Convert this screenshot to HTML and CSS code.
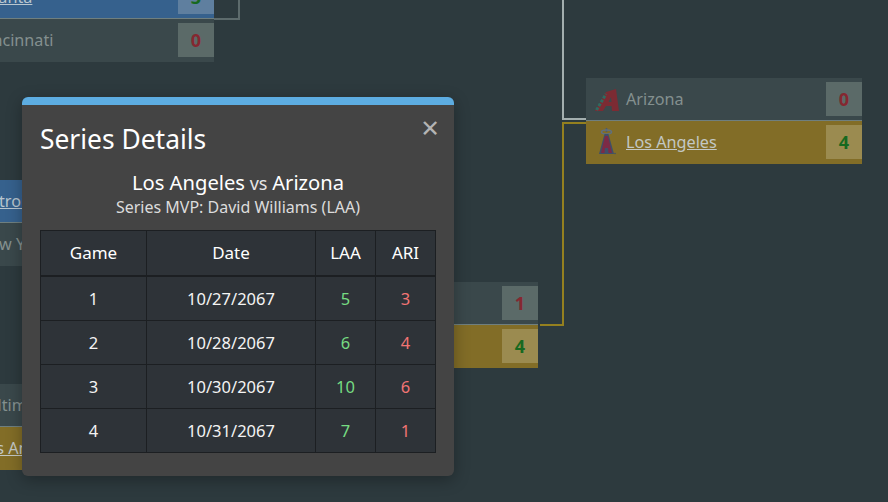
FILE: index.html
```html
<!DOCTYPE html>
<html lang="en">
<head>
    <meta charset="UTF-8">
    <meta name="viewport" content="width=device-width, initial-scale=1.0">
    <title>Playoff Bracket</title>
    <link rel="stylesheet" href="styles.css">
</head>
<body>
    <div class="bracket">
        <!-- connectors -->
        <div class="line line-top-left"></div>
        <div class="line line-final-win"></div>
        <div class="line line-final-lose"></div>
        <div class="line line-mid-win"></div>

        <div class="matchup matchup-atl">
            <div class="team team-blue"><span class="team-name"><a href="#">Atlanta</a></span><span class="score win">3</span></div>
            <div class="team"><span class="team-name">Cincinnati</span><span class="score lose">0</span></div>
        </div>

        <div class="matchup matchup-det">
            <div class="team team-blue"><span class="team-name"><a href="#">Detroit</a></span><span class="score win">4</span></div>
            <div class="team"><span class="team-name">New York</span><span class="score lose">2</span></div>
        </div>

        <div class="matchup matchup-bal">
            <div class="team"><span class="team-name">Baltimore</span><span class="score lose">1</span></div>
            <div class="team team-gold"><span class="team-name"><a href="#">Los Angeles</a></span><span class="score win">4</span></div>
        </div>

        <div class="matchup matchup-mid">
            <div class="team"><span class="team-name">Detroit</span><span class="score lose">1</span></div>
            <div class="team team-gold"><span class="team-name"><a href="#">Los Angeles</a></span><span class="score win">4</span></div>
        </div>

        <div class="matchup matchup-final">
            <div class="team">
                <svg class="logo" viewBox="0 0 26 30">
                    <path d="M1 27 L12 8 L22 5 L25 27 H18 L17.5 22 H12 L9 27 Z" fill="#7c2b33"/>
                    <path d="M2.5 26 L12 10" stroke="#2f6b60" stroke-width="3" stroke-dasharray="3 1.5"/>
                    <path d="M14.5 18 L17 13 L17.5 18 Z" fill="#3d474b"/>
                </svg>
                <span class="team-name">Arizona</span><span class="score lose">0</span>
            </div>
            <div class="team team-gold">
                <svg class="logo" viewBox="0 0 26 30">
                    <path d="M12.5 1 V5" stroke="#4a5a70" stroke-width="1.5"/>
                    <ellipse cx="12.5" cy="5" rx="5" ry="2" fill="none" stroke="#5f7080" stroke-width="1.5"/>
                    <path d="M10.5 7 H14.5 L20 27 H5 Z" fill="#3f4f68"/>
                    <path d="M11 9 H14 L18 26 H14.5 L14 21 H11 L10.5 26 H7 Z" fill="#7c2b46"/>
                    <circle cx="21" cy="26.5" r="0.8" fill="#3f4f68"/>
                </svg>
                <span class="team-name"><a href="#">Los Angeles</a></span><span class="score win">4</span>
            </div>
        </div>
    </div>

    <div class="modal">
        <button class="modal-close">&times;</button>
        <h2 class="modal-title">Series Details</h2>
        <div class="series-teams"><b>Los Angeles</b> vs <b>Arizona</b></div>
        <div class="series-mvp">Series MVP: David Williams (LAA)</div>
        <table class="games">
            <thead>
                <tr><th class="col-game">Game</th><th class="col-date">Date</th><th class="col-team">LAA</th><th class="col-team">ARI</th></tr>
            </thead>
            <tbody>
                <tr><td>1</td><td>10/27/2067</td><td class="won">5</td><td class="lost">3</td></tr>
                <tr><td>2</td><td>10/28/2067</td><td class="won">6</td><td class="lost">4</td></tr>
                <tr><td>3</td><td>10/30/2067</td><td class="won">10</td><td class="lost">6</td></tr>
                <tr><td>4</td><td>10/31/2067</td><td class="won">7</td><td class="lost">1</td></tr>
            </tbody>
        </table>
    </div>
</body>
</html>
```

FILE: styles.css
```css
* {
    box-sizing: border-box;
}
html, body {
    height: 100%;
}
body {
    margin: 0;
    overflow: hidden;
    background-color: #2d3a3e;
    font-family: "Noto Sans", sans-serif;
    color: #fff;
}
.bracket {
    position: relative;
    width: 888px;
    height: 502px;
}

/* bracket is a free canvas, matchups sit at their slots */
.matchup {
    position: absolute;
    width: 276px;
    height: 86px;
}
.matchup-atl { left: -62px; top: -24px; }
.matchup-det { left: -62px; top: 180px; }
.matchup-bal { left: -62px; top: 384px; }
.matchup-mid { left: 262px; top: 282px; }
.matchup-final { left: 586px; top: 78px; }

.team {
    display: flex;
    align-items: center;
    height: 43px;
    padding-left: 8px;
    padding-bottom: 1px;
    background-color: #3a484b;
    color: #84908f;
    font-size: 16.2px;
}
.team:first-child {
    padding-bottom: 0;
    border-bottom: 1px solid #6f7f7f;
}
.team-blue {
    background-color: #36618d;
    color: #b9c6cf;
}
.team-gold {
    background-color: #826d27;
    color: #c3c8c4;
}
.team-name {
    flex: 1;
    padding-left: 32px;
}
.logo + .team-name {
    padding-left: 6px;
}
.team-name a {
    color: inherit;
}
.logo {
    width: 26px;
    height: 30px;
    flex-shrink: 0;
}
.score {
    width: 36px;
    height: 34px;
    line-height: 34px;
    text-align: center;
    font-size: 18px;
    font-weight: bold;
    background-color: #5b6a68;
}
.team-gold .score {
    background-color: #9b8b50;
}
.team-blue .score {
    background-color: #5f7f9f;
}
.score.win {
    color: #17691f;
}
.score.lose {
    color: #852730;
}

.line {
    position: absolute;
    border-style: solid;
    border-width: 0;
    width: 0;
}
.line-top-left {
    left: 214px;
    top: 0;
    width: 26px;
    height: 20px;
    border-color: #5d6b6c;
    border-right-width: 2px;
    border-bottom-width: 2px;
}
.line-final-lose {
    left: 562px;
    top: 0;
    width: 24px;
    height: 120px;
    border-color: #a3aeae;
    border-left-width: 2px;
    border-bottom-width: 2px;
}
.line-final-win {
    left: 562px;
    top: 122px;
    width: 24px;
    height: 204px;
    border-color: #94801f;
    border-left-width: 2px;
    border-top-width: 2px;
    border-bottom-width: 0;
}
.line-mid-win {
    left: 540px;
    top: 324px;
    width: 24px;
    height: 2px;
    border-color: #94801f;
    border-top-width: 2px;
}

/* series popup */
.modal {
    position: absolute;
    left: 22px;
    top: 97px;
    width: 432px;
    height: 379px;
    padding: 0 18px;
    background-color: #444444;
    border-top: 8px solid #5dade2;
    border-radius: 6px;
    box-shadow: 0 4px 16px rgba(0, 0, 0, 0.3);
}
.modal-close {
    position: absolute;
    right: 15px;
    top: 7px;
    padding: 0;
    border: none;
    background: none;
    color: #b4b4b4;
    font-family: "Noto Sans", sans-serif;
    font-size: 31px;
    line-height: 30px;
    cursor: pointer;
}
.modal-title {
    margin: 0;
    padding-top: 17px;
    font-size: 26.4px;
    font-weight: normal;
    line-height: 35px;
}
.series-teams {
    margin-top: 12px;
    text-align: center;
    font-size: 18px;
    line-height: 26px;
    color: #e6e6e6;
}
.series-teams b {
    font-size: 20.2px;
    font-weight: normal;
    color: #fff;
}
.series-mvp {
    margin-top: 1px;
    text-align: center;
    font-size: 16px;
    line-height: 21px;
    color: #dcdcdc;
}
.games {
    width: 396px;
    margin-top: 12px;
    border-collapse: collapse;
    table-layout: fixed;
    background-color: #2e3338;
    font-size: 16.5px;
}
.games th, .games td {
    border: 1px solid #1c1f22;
    text-align: center;
    padding: 0;
}
.games th {
    height: 45px;
    font-size: 17px;
    font-weight: normal;
    border-bottom-width: 2px;
}
.games td {
    height: 44px;
    color: #f4f4f4;
}
.games tbody tr:first-child td {
    height: 45px;
}
.col-game { width: 106px; }
.col-date { width: 169px; }
.col-team { width: 60px; }
.games td.won { color: #76dc82; }
.games td.lost { color: #f27474; }
```
